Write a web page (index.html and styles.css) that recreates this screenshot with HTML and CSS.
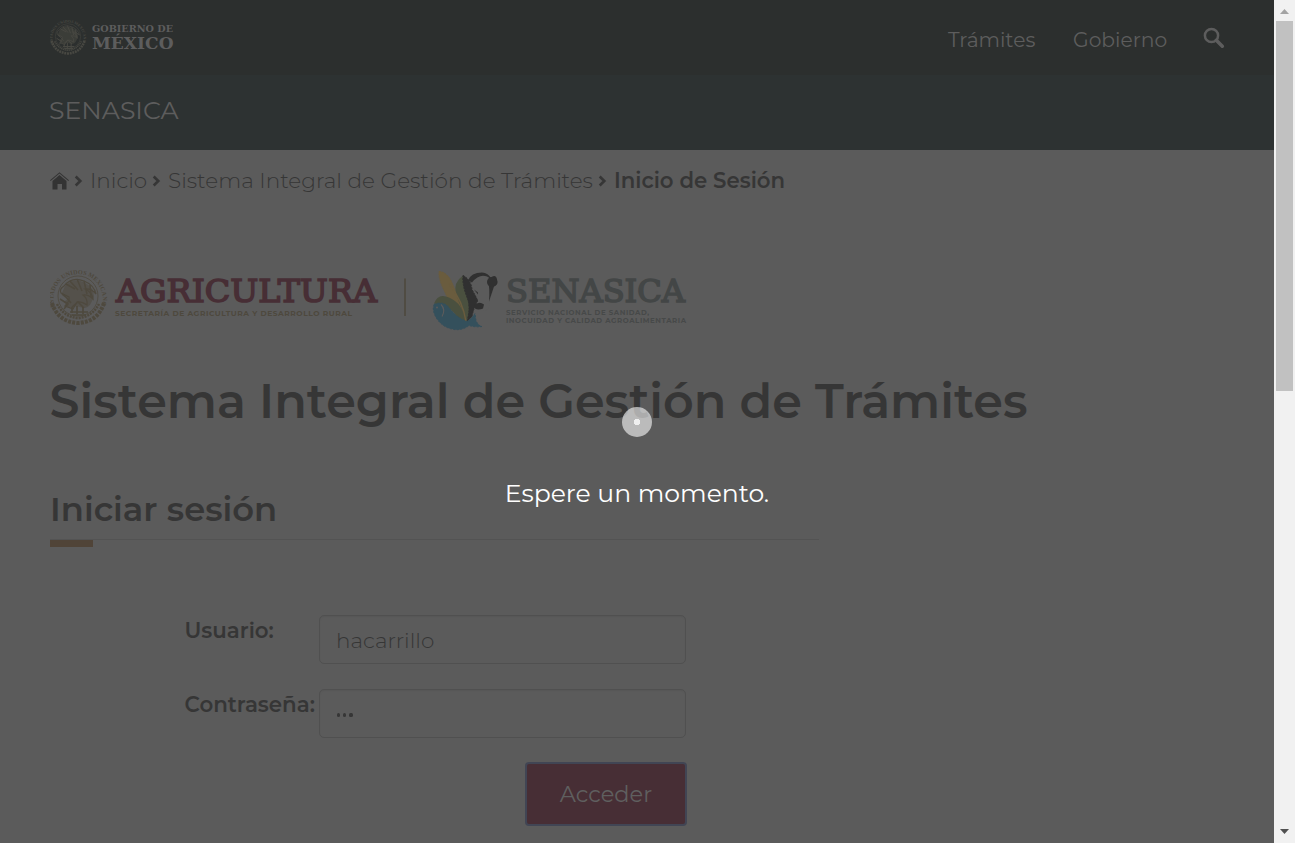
FILE: index.html
```
<!DOCTYPE html>
<html lang="es">
<head>
<meta charset="utf-8">
<title>Sistema Integral de Gestión de Trámites</title>
<link rel="stylesheet" href="styles.css">
</head>
<body>
<svg width="0" height="0" class="defs" aria-hidden="true">
  <defs>
    <path id="ring" d="M7 40A24.5 24.5 0 1 1 53 40"/>
    <symbol id="seal" viewBox="0 0 60 60">
      <text font-size="6.2" font-family="Liberation Serif, serif" font-weight="700" fill="currentColor"><textPath href="#ring" textLength="96">ESTADOS UNIDOS MEXICANOS</textPath></text>
      <g fill="none" stroke="currentColor">
        <path d="M4 36Q10 55 30 56Q50 55 56 36" stroke-width="4" stroke-dasharray="3 1.2"/>
        <path d="M9 37Q16 50 30 51Q44 50 51 37" stroke-width="2.5" stroke-dasharray="2 1"/>
        <circle cx="30" cy="29" r="20" stroke-width=".8"/>
        <path d="M16 19q8-10 20-5q10 4 12 13q-5-6-11-5q7 3 8 10q-5-5-10-4q5 4 4 10q-6-4-10-3l-4 7-8-3q5-5 4-9l-8-4q-2-4 3-7z" stroke-width="1.2"/>
        <path d="M18 17l9 5m-5-8l8 9m-1-11l5 12m2-10l3 13m3-9l1 12M14 27q5 3 9 9M12 32l8 5-4 5M24 40l6-5 6 6" stroke-width="1.5"/>
        <path d="M22 45h18m-16 3h14M24 40v6m5-7v8m6-7v7" stroke-width="1.7"/>
      </g>
      <path d="M17 19q9-9 20-3q9 4 9 14l-3 6q-2 5-8 5l-6-2-8 2-5-6 5-4-7-5z" fill="currentColor" opacity=".55"/>
    </symbol>
    <symbol id="chev" viewBox="0 0 9 12"><path d="M1.7 1.5L6.3 6L1.7 10.5" fill="none" stroke="currentColor" stroke-width="2.6"/></symbol>
  </defs>
</svg>

<div class="window">
  <div class="page">
    <header class="topbar">
      <svg class="gob-logo" width="126" height="40" viewBox="0 0 126 40" role="img" aria-label="Gobierno de México">
        <use href="#seal" x="-1" y="2" width="38" height="38" color="#484842"/>
        <g class="slab light">
          <text x="42" y="15.5" font-size="9.8" textLength="81" lengthAdjust="spacingAndGlyphs">GOBIERNO DE</text>
          <text x="42" y="33" font-size="17" textLength="81.5" lengthAdjust="spacingAndGlyphs">MÉXICO</text>
        </g>
      </svg>
      <nav class="topnav">
        <a class="nav-tramites">Trámites</a>
        <a class="nav-gobierno">Gobierno</a>
        <svg width="22" height="22" viewBox="0 0 22 22"><circle cx="8.5" cy="8.5" r="6.6" fill="none" stroke="#5d5d5d" stroke-width="2.5"/><path d="M13.3 13.3L19.3 19.2" stroke="#5d5d5d" stroke-width="3.6" stroke-linecap="round"/></svg>
      </nav>
    </header>
    <div class="subbar"><span>SENASICA</span></div>

    <main class="content">
      <div class="crumbs">
        <svg class="home" width="20" height="18" viewBox="0 0 20 18"><path d="M2.5 9L9.5 3L16.5 9V17.5H12V12H7.5V17.5H2.5Z" fill="#333"/><path d="M.3 8.7L9.5 .9L18.7 8.7" fill="none" stroke="#353535" stroke-width="1.1"/></svg>
        <svg class="sep"><use href="#chev"/></svg>
        <a class="c1">Inicio</a>
        <svg class="sep"><use href="#chev"/></svg>
        <a class="c2">Sistema Integral de Gestión de Trámites</a>
        <svg class="sep"><use href="#chev"/></svg>
        <b class="c3">Inicio de Sesión</b>
      </div>

      <svg class="brands" width="660" height="66" viewBox="0 0 660 66" role="img" aria-label="Agricultura, SENASICA">
        <use href="#seal" x="-2" y="2" width="60" height="60" color="#4e493e"/>
        <g class="slab agri">
          <text x="66" y="37" font-size="32.5" textLength="261" lengthAdjust="spacingAndGlyphs">AGRICULTURA</text>
        </g>
        <text class="small gold" x="65" y="51" font-size="7.5" textLength="237">SECRETARÍA DE AGRICULTURA Y DESARROLLO RURAL</text>
        <path d="M355 13.5V51" stroke="#4e493e" stroke-width="1.6"/>
        <g transform="translate(0 -1.5)">
          <path d="M389 8q7 0 12 9q6 12 9 23l3 13q-12-9-18-24q-7-14-6-21z" fill="#6a5c3e" stroke="#6a5c3e" stroke-dasharray="2 1"/>
          <path d="M413 12q-10 7-7 18q3 9 6 16l3 14q10-15 8-27q-2-14-10-21z" fill="#4a503f"/>
          <path d="M413 12q8 4 9 14l6 11q-4 6-6 16l-5 5q4-15 0-24q-5-13-4-22z" fill="#303030" stroke="#303030" stroke-dasharray="2 1"/>
          <path d="M384 40q4-11 15-6q14 6 16 23l-4 5q-6-16-17-20z" fill="#4a503f"/>
          <path d="M399 20q14 18 17 38" fill="none" stroke="#6a5c3e" stroke-width="1.5"/>
          <path d="M384 41q9-4 15 3q7 10 18 14q5-3 8-8l1 7q2 5 6 6q-7 1-13-1q-6 5-15 4q-12-2-18-12q-4-7-2-13z" fill="#34505c" stroke="#34505c" stroke-dasharray="2 1.5"/>
          <path d="M391 41q5 5 1 12" fill="none" stroke="#5b5b5b" stroke-width="1.1"/>
          <circle cx="387" cy="44" r="1" fill="#5b5b5b"/>
          <path d="M420 16q9-5 17-2q10 4 5 15l-3 14q-3 7-8 2l-4-11-5-14z" fill="#5b5b5b"/>
          <path d="M418 17q3-8 14-8q6 0 10 7l-5-3q-8-3-15 6zM438 16q8-7 9 0q2 5-3 7l-5 15q1-13-1-22z" fill="#303030"/>
          <circle cx="442" cy="18.500" r="5" fill="#303030"/>
          <path d="M424 42q5-5 10-1l-1 4q-5 2-8 0zM424 26l4 3v2zM435 26l-3 4z" fill="#303030"/>
        </g>
        <g class="slab sena">
          <text x="456" y="36.5" font-size="32.5" textLength="179" lengthAdjust="spacingAndGlyphs">SENASICA</text>
        </g>
        <g class="small gray">
          <text x="456" y="50" font-size="7" textLength="143">SERVICIO NACIONAL DE SANIDAD,</text>
          <text x="456" y="58" font-size="7" textLength="180">INOCUIDAD Y CALIDAD AGROALIMENTARIA</text>
        </g>
      </svg>

      <h1>Sistema Integral de Gestión de Trámites</h1>
      <h2>Iniciar sesión</h2>

      <form class="login">
        <label>Usuario:</label>
        <div class="field">hacarrillo</div>
        <label>Contraseña:</label>
        <div class="field dots"><i></i><i></i><i></i></div>
        <div class="button">Acceder</div>
      </form>
    </main>
    <div class="overlay">
      <div class="spinner"></div>
      <p>Espere un momento.</p>
    </div>
  </div>
  <div class="scrollbar">
    <svg width="21" height="21"><path d="M6 14h9l-4.500-5z" fill="#a3a3a3"/></svg>
    <div class="thumb"></div>
    <svg class="down" width="21" height="21"><path d="M6 7h9l-4.500 5z" fill="#505050"/></svg>
  </div>
</div>
</body>
</html>
```
FILE: styles.css
```
* { box-sizing: border-box; }
body { margin: 0; overflow: hidden; font-family: Montserrat, Inter, sans-serif; font-size: 21.5px; color: #363636; }
.defs { position: absolute; }
.window { display: flex; width: 1295px; height: 843px; }
.page { position: relative; width: 1274px; height: 843px; overflow: hidden; background: #5b5b5b; }
.topbar { display: flex; justify-content: space-between; height: 75px; padding: 16px 49px 0 50px; background: #2c2f2e; }
.gob-logo { display: block; }
.topnav { display: flex; align-items: flex-start; color: #5d5d5d; font-size: 20.25px; line-height: 26px; padding-top: 11px; }
.topnav a { white-space: nowrap; }
.nav-tramites { width: 125px; }
.nav-gobierno { width: 130px; }
.subbar { display: flex; height: 75px; padding: 19px 49px; background: #2d3232; color: #5d5d5d; font-size: 25.2px; line-height: 32px; }
.content { padding: 0 50px; }
.crumbs { display: flex; height: 62px; align-items: center; white-space: nowrap; font-weight: 300; line-height: 26px; }
.crumbs a, .crumbs b { margin-top: -2px; }
.sep { width: 9px; height: 12px; }
.home { margin-right: 4px; }
.crumbs .c1 { width: 62px; margin-left: 7px; }
.crumbs .c2 { width: 430px; margin-left: 7px; font-size: 21.6px; }
.crumbs .c3 { margin-left: 7px; font-size: 21.25px; font-weight: 600; }
.brands { display: block; margin-top: 53px; }
.slab { font-family: "DejaVu Serif", serif; font-weight: 700; }
.slab.light { fill: #5d5d5d; }
.slab.agri { fill: #472e35; font-weight: 400; stroke: #472e35; stroke-width: 1.6px; }
.slab.sena { fill: #434646; font-weight: 400; stroke: #434646; stroke-width: 1.6px; }
.small { font-family: Montserrat, Inter, sans-serif; font-weight: 700; }
.small.gold { fill: #4e493e; }
.small.gray { fill: #474949; }
h1 { margin: 42px 0 0 -0.5px; font-size: 47.65px; line-height: 57px; font-weight: 600; white-space: nowrap; }
h2 { position: relative; width: 769px; height: 54px; margin: 56px 0 0; border-bottom: 1px solid #535353; font-size: 33.75px; line-height: 46px; font-weight: 600; white-space: nowrap; }
h2::after { content: ""; position: absolute; left: 0; top: 54px; width: 43px; height: 7px; background: #504438; }
.login { display: grid; grid-template-columns: 134px 367px; row-gap: 25px; margin: 75px 0 0 135px; }
.login label { margin-left: -.5px; font-weight: 600; font-size: 21.35px; line-height: 30px; white-space: nowrap; }
.field { height: 49px; padding: 0 16px; border: 1px solid #505050; border-radius: 5px; box-shadow: inset 0 1px 1px #575757; font-weight: 300; line-height: 48px; }
.dots { display: flex; align-items: center; gap: 3px; padding: 3px 17px 0; }
.dots i { width: 3.2px; height: 3.2px; border-radius: 50%; background: #363636; }
.button { grid-column: 2; justify-self: end; width: 162px; height: 64px; margin: -1px -1px 0 0; border: 2px solid #414554; border-radius: 4px; background: #472e35; color: #5f5f5f; font-size: 22.5px; line-height: 61px; text-align: center; }
.overlay { position: absolute; inset: 0; display: flex; flex-direction: column; align-items: center; padding-top: 407px; color: #fff; }
.spinner { width: 30px; height: 30px; border-radius: 50%; background: radial-gradient(circle, rgba(255,255,255,.9) 0 3px, rgba(255,255,255,.59) 3.5px); }
.overlay p { margin: 40px 0 0; font-size: 25.1px; line-height: 32px; white-space: nowrap; }
.scrollbar { display: flex; flex-direction: column; width: 21px; background: #f1f1f1; }
.scrollbar svg { display: block; }
.thumb { width: 17px; height: 370px; margin-left: 2px; background: #c1c1c1; }
.down { margin-top: auto; }
```
